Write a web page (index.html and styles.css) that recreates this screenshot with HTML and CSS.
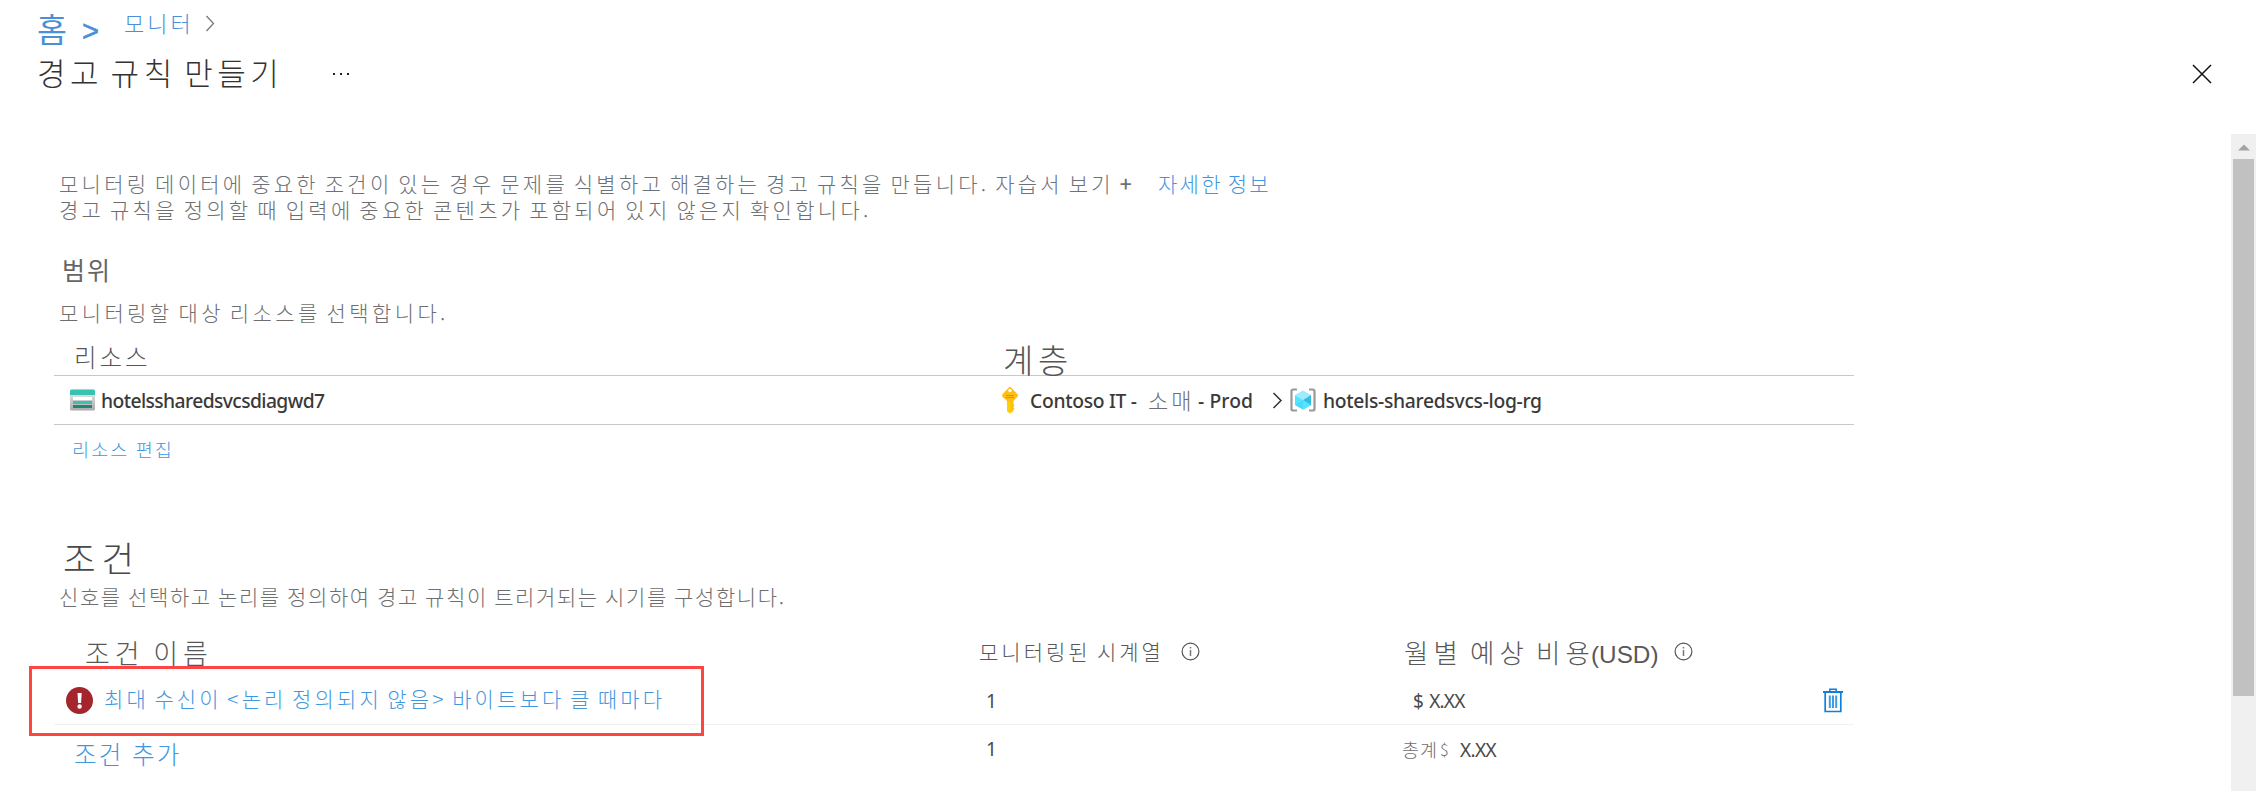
FILE: index.html
```html
<!DOCTYPE html>
<html lang="ko">
<head>
<meta charset="utf-8">
<title>경고 규칙 만들기</title>
<link rel="stylesheet" href="styles.css">
</head>
<body>
<header class="header">
  <nav class="crumbs">
    <a class="home">홈</a><span class="home-gt">&gt;</span>
    <a class="crumb">모니터</a>
    <svg class="crumb-chev" width="11" height="17" viewBox="0 0 11 17"><path d="M1.500 1l7 7.500-7 7.500" fill="none" stroke="#777" stroke-width="1.300"/></svg>
  </nav>
  <div class="title-row">
    <h1 class="title">경고 규칙 만들기</h1>
    <svg class="more" width="18" height="4" viewBox="0 0 18 4"><path d="M1 1h2v2H1zM8 1h2v2H8zM15 1h2v2h-2z" fill="#222"/></svg>
    <svg class="close" width="20" height="20" viewBox="0 0 20 20"><path d="M1 1l18 18M19 1L1 19" stroke="#111" stroke-width="1.500"/></svg>
  </div>
</header>
<div class="body">
  <main class="content">
    <p class="text intro"><span class="intro-a">모니터링 데이터에 중요한 조건이 있는 경우 문제를 식별하고 해결하는 경고 규칙을 만듭니다. 자습서 보기 <b class="plus">+</b></span><a class="more-link">자세한 정보</a></p>
    <p class="text line2">경고 규칙을 정의할 때 입력에 중요한 콘텐츠가 포함되어 있지 않은지 확인합니다.</p>
    <h2 class="scope">범위</h2>
    <p class="text scope-text">모니터링할 대상 리소스를 선택합니다.</p>
    <section class="res">
      <div class="res-head"><span class="res-h1">리소스</span><span class="res-h2">계층</span></div>
      <div class="res-row">
        <div class="res-name">
          <svg width="25" height="22" viewBox="0 0 25 22"><defs><linearGradient id="g" x1="0" y1="0" x2="0" y2="1"><stop offset="0" stop-color="#eee"/><stop offset="1" stop-color="#aaa"/></linearGradient></defs><rect width="25" height="21" y=".5" rx="1.500" fill="url(#g)"/><path d="M0 6V2Q0 .5 1.500 .5h22Q25 .5 25 2v4z" fill="#37c2b1"/><path fill="#fff" d="M3 8h19v3H3z"/><path fill="#37c2b1" d="M3 12h19v3H3z"/><path fill="#258277" d="M3 16h19v3H3z"/></svg>
          <span class="seg name">hotelssharedsvcsdiagwd7</span>
        </div>
        <div class="res-path">
          <svg class="key" width="18" height="28" viewBox="0 0 18 28"><path d="M8 1.200q1-1 2 0l6.500 7q1 1.300 0 2.600L12.500 15v3l1 1.500-1.200 1.500 1.200 1.500-1.200 1.500v1L9 27.500 6 25V15l-4.500-4.200q-1-1.300 0-2.600z" fill="#ffbf12"/><path d="M6 15h3.500v11.500L9 27.500 6 25z" fill="#ffd000"/><circle cx="9" cy="4.500" r="1.700" fill="#fff"/><path d="M5 9.500h8M5 11.500h8" stroke="#e88f00"/></svg>
          <span class="seg c1">Contoso IT -</span><span class="retail">소매</span><span class="seg c2">- Prod</span>
          <svg class="chev" width="11" height="17" viewBox="0 0 11 17"><path d="M1.500 1l7.500 7.500L1.500 16" fill="none" stroke="#333" stroke-width="1.500"/></svg>
          <svg class="cube" width="26" height="24" viewBox="0 0 26 24"><path d="M7 1.500H3.500Q1.500 1.500 1.500 3v18q0 1.500 2 1.500H7M19 1.500h3.500q2 0 2 1.500v18q0 1.500-2 1.500H19" fill="none" stroke="#999" stroke-width="2.200"/><path d="M13 2.500l8 4.500-8 5-8-5z" fill="#9cebff"/><path d="M5 7l8 5v9.500L5 17z" fill="#50e6ff"/><path d="M21 7l-8 5v9.500l8-4.500z" fill="#32bedd"/><path d="M5 17l8-5v9.500z" fill="#50d8f8"/><path d="M21 17l-8-5v9.500z" fill="#50e6ff"/></svg>
          <span class="seg c3">hotels-sharedsvcs-log-rg</span>
        </div>
      </div>
    </section>
    <a class="edit">리소스 편집</a>
    <h2 class="cond">조건</h2>
    <p class="text cond-text">신호를 선택하고 논리를 정의하여 경고 규칙이 트리거되는 시기를 구성합니다.</p>
    <section class="conds">
      <div class="grid head">
        <span class="h-name">조건 이름</span>
        <span class="h-series">모니터링된 시계열<svg class="info" width="19" height="19" viewBox="0 0 19 19"><circle cx="9.500" cy="9.500" r="8.400" fill="none" stroke="#555" stroke-width="1.200"/><path d="M9.500 8v6M9.500 5v1.600" stroke="#777" stroke-width="1.500"/></svg></span>
        <span class="h-cost"><span class="h-cost-l">월별 예상 비용</span><span class="usd">(USD)</span><svg class="info" width="19" height="19" viewBox="0 0 19 19"><circle cx="9.500" cy="9.500" r="8.400" fill="none" stroke="#555" stroke-width="1.200"/><path d="M9.500 8v6M9.500 5v1.600" stroke="#777" stroke-width="1.500"/></svg></span>
      </div>
      <div class="grid row">
        <span class="signal"><svg width="27" height="27" viewBox="0 0 27 27"><circle cx="13.500" cy="13.500" r="13.500" fill="#a4262c"/><path d="M11.500 6h4.200l-.6 10h-3z" fill="#fff"/><circle cx="13.600" cy="19.500" r="2.200" fill="#fff"/></svg><a class="signal-link">최대 수신이 &lt;논리 정의되지 않음&gt; 바이트보다 클 때마다</a></span>
        <span class="num">1</span>
        <span class="cost">$ X.XX</span>
        <svg class="trash" width="20" height="25" viewBox="0 0 20 25"><g fill="none" stroke="#0f7fd8"><path d="M0 4h20" stroke-width="2"/><path d="M6.800 4V1.200h6.400V4" stroke-width="1.500"/><path d="M2.200 4v19.500h15.600V4" stroke-width="1.700"/><path d="M6.800 7.500v12.500M10 7.500v12.500M13.200 7.500v12.500" stroke="#3f9be3" stroke-width="2"/></g></svg>
      </div>
      <div class="grid foot">
        <a class="add">조건 추가</a>
        <span class="num">1</span>
        <span class="total"><span class="total-l">총계</span><span class="total-d">$</span><span class="total-v">X.XX</span></span>
      </div>
      <div class="highlight"></div>
    </section>
  </main>
  <aside class="scroll"><svg width="12" height="7" viewBox="0 0 12 7"><path d="M0 6.500L6 .5l6 6z" fill="#a3a3a3"/></svg><div class="thumb"></div></aside>
</div>
</body>
</html>
```
FILE: styles.css
```css
* { box-sizing: border-box; }
body { margin: 0; width: 2256px; height: 791px; overflow: hidden; background: #fff; font-family: "Noto Sans CJK KR", sans-serif; font-weight: 300; white-space: nowrap; color: #6e6e6e; }
h1, h2, p { margin: 0; font-weight: 300; }
svg { display: block; flex: none; }
.header { height: 134px; }
.crumbs { display: flex; align-items: flex-start; height: 48px; padding-left: 37px; color: #4a90d8; }
.home { font-size: 32.500px; line-height: 56px; width: 45px; font-weight: 400; }
.home-gt { font: 400 29px/62px "Liberation Sans", sans-serif; -webkit-text-stroke: .6px; width: 42px; }
.crumb { font-size: 22px; line-height: 44px; letter-spacing: 3px; width: 81px; }
.crumb-chev { margin-top: 15px; }
.title-row { display: flex; align-items: center; height: 48px; padding-left: 37px; }
.title { font-size: 31px; line-height: 46px; letter-spacing: 4.500px; word-spacing: -5.600px; width: 295px; font-weight: 300; color: #333; }
.more { margin-top: 4px; }
.close { margin: 4px 0 0 1842px; }
.body { display: flex; height: 657px; }
.content { flex: 1; padding: 36px 0 0 54px; }
.text { font-size: 21px; line-height: 26px; letter-spacing: 3.270px; word-spacing: -3.300px; padding-left: 5px; }
.intro { display: flex; color: #6b7278; letter-spacing: 3.250px; }
.intro-a { width: 1099px; }
.plus { font-weight: 500; }
.more-link { color: #3f97e0; letter-spacing: 2.300px; }
.scope { margin-top: 32px; padding-left: 8px; font-size: 25px; line-height: 30px; letter-spacing: 2px; font-weight: 400; color: #666; }
.scope-text { margin-top: 15px; letter-spacing: 3.380px; }
.res { width: 1800px; margin-top: 1px; }
.res-head { display: grid; grid-template-columns: 950px 1fr; height: 50px; padding-top: 16px; border-bottom: 1px solid #c8c8c8; color: #555; }
.res-h1 { padding-left: 20px; font-size: 24.500px; line-height: 29px; letter-spacing: 3px; }
.res-h2 { font-size: 33px; line-height: 34px; letter-spacing: 4.600px; margin-left: -1px; }
.res-row { display: grid; grid-template-columns: 947px 1fr; height: 49px; border-bottom: 1px solid #c8c8c8; }
.res-name, .res-path { display: flex; align-items: center; }
.res-name { padding-left: 16px; gap: 6px; }
.seg { font: 500 19.300px/26px "Noto Sans", sans-serif; color: #3a3a3a; padding-top: 2px; letter-spacing: -.3px; }
.name { letter-spacing: -.6px; }
.c1 { margin-left: 11px; width: 118px; }
.retail { font-size: 22px; line-height: 24px; letter-spacing: 3px; width: 50px; padding-bottom: 3px; }
.c2 { width: 74px; letter-spacing: .1px; }
.cube { margin: 0 7px; }
.edit { display: block; margin-top: 12px; padding-left: 18px; font-size: 18.500px; line-height: 24px; letter-spacing: 2.150px; word-spacing: -1.200px; color: #3f97e0; }
.cond { margin-top: 76px; padding-left: 9px; font-size: 35.500px; line-height: 40px; letter-spacing: 5.900px; color: #484848; }
.cond-text { margin-top: 6px; letter-spacing: 1.600px; word-spacing: -1.200px; }
.conds { position: relative; width: 1800px; margin-top: 27px; }
.grid { display: grid; grid-template-columns: 926px 424px 419px 1fr; }
.head { height: 32px; line-height: 32px; color: #585858; }
.h-name { padding-left: 31px; font-size: 27px; line-height: 33px; letter-spacing: 5px; word-spacing: -4px; }
.h-series { display: flex; font-size: 21px; line-height: 30px; letter-spacing: 3px; word-spacing: -2.600px; margin-left: -1px; }
.h-cost { display: flex; }
.h-cost-l { width: 187px; font-size: 26.500px; letter-spacing: 5.100px; word-spacing: -5.500px; }
.usd { font: 400 24.300px/37px "Liberation Sans", sans-serif; width: 66px; }
.info { margin: 6px 0 0 17px; }
.row { height: 57px; padding-top: 9px; align-items: center; border-bottom: 1px solid #f1f1f1; }
.signal { display: flex; align-items: center; padding-left: 12px; gap: 11px; }
.signal-link { font-size: 21px; line-height: 26px; letter-spacing: 3.130px; word-spacing: -3.500px; margin-top: -5px; color: #3f97e0; }
.num, .cost, .total-v { font: 400 19px/26px "Noto Sans", sans-serif; color: #4a4a4a; }
.num { padding-left: 6px; }
.cost { padding-left: 9px; letter-spacing: -.8px; word-spacing: 2px; }
.foot { height: 48px; align-items: center; }
.add { padding-left: 20px; padding-top: 9px; font-size: 24.500px; line-height: 30px; letter-spacing: 2.200px; word-spacing: -.6px; color: #3f97e0; }
.total { display: flex; align-items: center; line-height: 26px; }
.total-l { font-size: 18.500px; width: 38px; letter-spacing: 1px; margin-left: -2px; }
.total-d { font-size: 16px; width: 20px; }
.total-v { letter-spacing: -.6px; padding-top: 2px; }
.highlight { position: absolute; left: -25px; top: 30px; width: 675px; height: 70px; border: 3px solid #ff4444; }
.scroll { width: 25px; padding: 10px 2px 0; background: #f0f0f0; }
.scroll svg { margin: 0 0 8px 5px; }
.thumb { height: 537px; background: #c1c1c1; }
```
